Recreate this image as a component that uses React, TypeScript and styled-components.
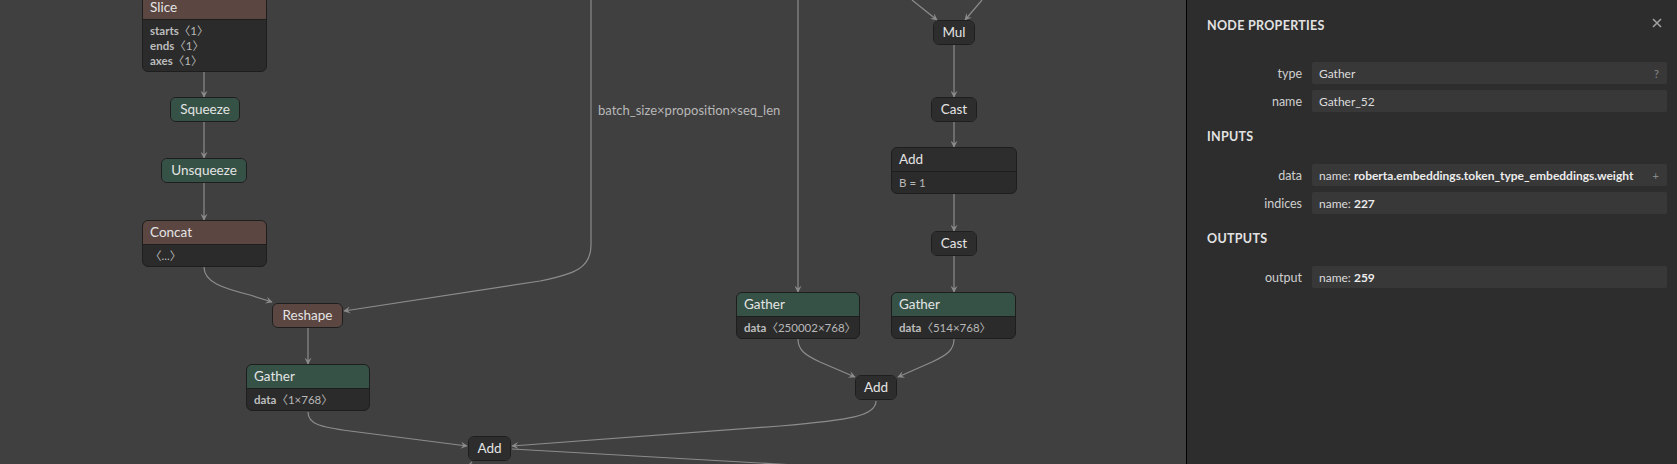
import styled, { createGlobalStyle } from "styled-components";

type Attr = { key?: string; value: string };
type Kind = "shape" | "data" | "plain";
type GraphNode = { title: string; x: number; y: number; w: number; kind: Kind; attrs?: Attr[] };

const nodes: GraphNode[] = [
  {
    title: "Slice",
    x: 142,
    y: -5,
    w: 125,
    kind: "shape",
    attrs: [
      { key: "starts", value: "〈1〉" },
      { key: "ends", value: "〈1〉" },
      { key: "axes", value: "〈1〉" },
    ],
  },
  { title: "Squeeze", x: 170, y: 97, w: 70, kind: "data" },
  { title: "Unsqueeze", x: 161, y: 158, w: 86, kind: "data" },
  { title: "Concat", x: 142, y: 220, w: 125, kind: "shape", attrs: [{ value: "〈...〉" }] },
  { title: "Reshape", x: 272, y: 303, w: 71, kind: "shape" },
  { title: "Gather", x: 246, y: 364, w: 124, kind: "data", attrs: [{ key: "data", value: "〈1×768〉" }] },
  { title: "Add", x: 468, y: 436, w: 43, kind: "plain" },
  { title: "Mul", x: 933, y: 20, w: 42, kind: "plain" },
  { title: "Cast", x: 931, y: 97, w: 46, kind: "plain" },
  { title: "Add", x: 891, y: 147, w: 126, kind: "plain", attrs: [{ value: "B = 1" }] },
  { title: "Cast", x: 931, y: 231, w: 46, kind: "plain" },
  { title: "Gather", x: 736, y: 292, w: 124, kind: "data", attrs: [{ key: "data", value: "〈250002×768〉" }] },
  { title: "Gather", x: 891, y: 292, w: 125, kind: "data", attrs: [{ key: "data", value: "〈514×768〉" }] },
  { title: "Add", x: 855, y: 375, w: 42, kind: "plain" },
];

// edges with arrow heads at the end
const edges = [
  "M204,71 L204,97",
  "M204,122 L204,158",
  "M204,183 L204,220",
  "M204,267 C204,282 222,288 250,295 L272,302",
  "M591,0 L591,245 C591,268 575,274 540,281 L344,311",
  "M308,328 L308,364",
  "M308,412 C308,424 320,427 350,431 L467,446",
  "M876,401 C876,416 850,420 780,426 L512,446",
  "M798,0 L798,292",
  "M912,0 L937,20",
  "M982,0 L965,20",
  "M954,45 L954,97",
  "M954,122 L954,147",
  "M954,194 L954,231",
  "M954,256 L954,292",
  "M798,339 C798,350 805,355 820,362 L855,377",
  "M954,339 C954,350 947,355 932,362 L898,377",
];

// edges leaving the view, no arrow
const outEdges = ["M512,449 L830,467", "M472,462 L464,470"];

const props = [{ label: "type", value: "Gather", action: "?" }, { label: "name", value: "Gather_52" }];
const inputs = [
  { label: "data", value: "roberta.embeddings.token_type_embeddings.weight", action: "+" },
  { label: "indices", value: "227" },
];
const outputs = [{ label: "output", value: "259" }];

const GlobalStyle = createGlobalStyle`
  html, body {
    margin: 0;
    padding: 0;
    background: #404040;
    overflow: hidden;
  }
  body {
    font-family: Lato, "Noto Sans", "Noto Sans CJK SC", sans-serif;
  }
`;

const headerColors: Record<Kind, string> = {
  shape: "#5b4642",
  data: "#365246",
  plain: "#2d2d2d",
};

function Node({ node }: { node: GraphNode }) {
  const hasAttrs = !!node.attrs;
  return (
    <NodeBox style={{ left: node.x, top: node.y, width: node.w }}>
      <NodeTitle kind={node.kind} hasAttrs={hasAttrs}>
        {node.title}
      </NodeTitle>
      {hasAttrs && (
        <NodeAttrs>
          {node.attrs!.map((a, i) => (
            <AttrRow key={i}>
              {a.key && <b>{a.key}</b>}
              {a.value}
            </AttrRow>
          ))}
        </NodeAttrs>
      )}
    </NodeBox>
  );
}

function PropRow({ label, children, action }: { label: string; children: React.ReactNode; action?: string }) {
  return (
    <Row>
      <Label>{label}</Label>
      <Value>
        <span>{children}</span>
        {action && <Action>{action}</Action>}
      </Value>
    </Row>
  );
}

function App() {
  return (
    <Page>
      <GlobalStyle />
      <Canvas>
        <Edges width="1186" height="464">
          <defs>
            <marker
              id="arrow"
              viewBox="0 0 10 10"
              refX="9"
              refY="5"
              markerUnits="userSpaceOnUse"
              markerWidth="9"
              markerHeight="7"
              orient="auto"
            >
              <Arrowhead d="M0,0 L10,5 L0,10 L4,5 z" />
            </marker>
          </defs>
          {edges.map((d, i) => (
            <Edge key={i} d={d} markerEnd="url(#arrow)" />
          ))}
          {outEdges.map((d, i) => (
            <Edge key={"o" + i} d={d} />
          ))}
        </Edges>
        <EdgeLabel>batch_size×proposition×seq_len</EdgeLabel>
        {nodes.map((n, i) => (
          <Node key={i} node={n} />
        ))}
      </Canvas>
      <Sidebar>
        <SidebarHeader>
          <SidebarTitle>Node Properties</SidebarTitle>
          <Close width="10" height="10" viewBox="0 0 10 10">
            <path d="M1,1 L9,9 M9,1 L1,9" />
          </Close>
        </SidebarHeader>
        <PropList>
          {props.map((p) => (
            <PropRow key={p.label} label={p.label} action={p.action}>
              {p.value}
            </PropRow>
          ))}
        </PropList>
        <SectionTitle>Inputs</SectionTitle>
        <PropList>
          {inputs.map((p) => (
            <PropRow key={p.label} label={p.label} action={p.action}>
              name: <b>{p.value}</b>
            </PropRow>
          ))}
        </PropList>
        <SectionTitle>Outputs</SectionTitle>
        <PropList>
          {outputs.map((p) => (
            <PropRow key={p.label} label={p.label}>
              name: <b>{p.value}</b>
            </PropRow>
          ))}
        </PropList>
      </Sidebar>
    </Page>
  );
}

const Page = styled.div`
  display: flex;
  width: 1677px;
  height: 464px;
  overflow: hidden;
`;

const Canvas = styled.div`
  position: relative;
  flex: 1;
  height: 100%;
  background: #404040;
  overflow: hidden;
`;

const Edges = styled.svg`
  position: absolute;
  left: 0;
  top: 0;
`;

const Edge = styled.path`
  fill: none;
  stroke: #8c8c8c;
  stroke-width: 1.2;
`;

const Arrowhead = styled.path`
  fill: #8c8c8c;
  stroke: none;
`;

const EdgeLabel = styled.div`
  position: absolute;
  left: 598px;
  top: 101px;
  font-size: 13px;
  line-height: 19px;
  color: #b8b8b8;
  white-space: nowrap;
`;

const NodeBox = styled.div`
  position: absolute;
  box-sizing: border-box;
  border: 1px solid #1e1e1e;
  border-radius: 6px;
  overflow: hidden;
  background: #2b2b2b;
`;

const NodeTitle = styled.div<{ kind: Kind; hasAttrs: boolean }>`
  height: 23px;
  line-height: 23px;
  padding: 0 7px;
  font-size: 13.5px;
  color: #e4e4e4;
  white-space: nowrap;
  text-align: ${({ hasAttrs }) => (hasAttrs ? "left" : "center")};
  background: ${({ kind }) => headerColors[kind]};
  border-bottom: ${({ hasAttrs }) => (hasAttrs ? "1px solid #1e1e1e" : "none")};
`;

const NodeAttrs = styled.div`
  padding: 3px 7px;
`;

const AttrRow = styled.div`
  font-size: 11.5px;
  line-height: 15px;
  color: #b8b8b8;
  white-space: nowrap;

  b {
    font-weight: 700;
    color: #bdbdbd;
  }
`;

const Sidebar = styled.div`
  box-sizing: border-box;
  width: 491px;
  height: 100%;
  padding: 0 10px 0 20px;
  background: #2d2d2d;
  border-left: 1px solid #000;
  color: #d0d0d0;
`;

const SidebarHeader = styled.div`
  display: flex;
  align-items: center;
  justify-content: space-between;
  height: 50px;
`;

const SidebarTitle = styled.div`
  font-size: 12.5px;
  font-weight: 700;
  letter-spacing: 0.3px;
  text-transform: uppercase;
  color: #e2e2e2;
`;

const Close = styled.svg`
  margin: 0 5px 4px 0;

  path {
    stroke: #a0a0a0;
    stroke-width: 1.6;
  }
`;

const PropList = styled.div`
  display: flex;
  flex-direction: column;
  gap: 6px;
  margin-top: 12px;
`;

const SectionTitle = styled.div`
  height: 16px;
  line-height: 16px;
  margin: 17px 0 19px;
  font-size: 12.5px;
  font-weight: 700;
  letter-spacing: 0.3px;
  text-transform: uppercase;
  color: #e2e2e2;
`;

const Row = styled.div`
  display: grid;
  grid-template-columns: 95px 1fr;
  column-gap: 10px;
  align-items: center;
`;

const Label = styled.div`
  text-align: right;
  font-size: 12.5px;
  color: #cfcfcf;
`;

const Value = styled.div`
  display: flex;
  align-items: center;
  justify-content: space-between;
  height: 22px;
  padding: 0 8px 0 7px;
  background: #383838;
  border-radius: 2px;
  font-size: 12px;
  color: #dcdcdc;
  white-space: nowrap;

  b {
    font-weight: 700;
    color: #ececec;
  }
`;

const Action = styled.span`
  color: #8a8a8a;
  font-size: 11px;
`;

export default App;
